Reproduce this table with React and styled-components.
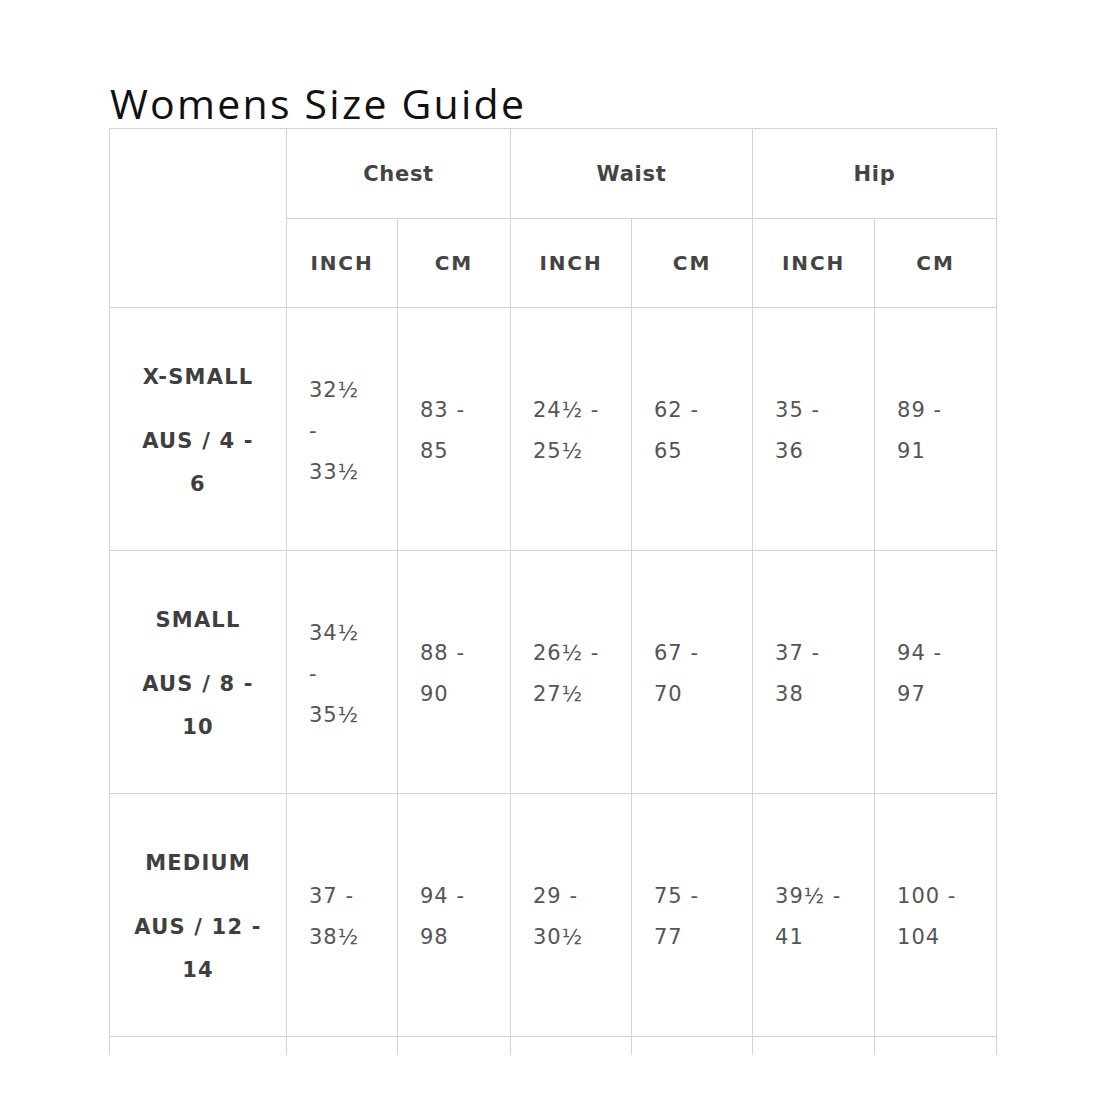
import React from "react";
import styled, { createGlobalStyle } from "styled-components";

const GlobalStyle = createGlobalStyle`
  body {
    margin: 0;
    background: #fff;
    font-family: "DejaVu Sans", "Open Sans", sans-serif;
  }
`;

const Page = styled.div`
  padding: 78px 0 0 109px;
`;

const Title = styled.h2`
  margin: 0 0 0 1px;
  font-family: "Open Sans", sans-serif;
  font-size: 41px;
  font-weight: 400;
  line-height: 50px;
  color: #111;
  letter-spacing: 2.25px;
`;

const Clip = styled.div`
  width: 888px;
  height: 927px;
  overflow: hidden;
`;

const Table = styled.table`
  width: 888px;
  table-layout: fixed;
  border-collapse: collapse;
  border: 1px solid #d3d3d3;
`;

const Cell = styled.td`
  border: 1px solid #d3d3d3;
  padding: 4px 0 0 ${(p) => (p.$center ? 0 : 22)}px;
  height: 238px;
  vertical-align: middle;
  text-align: ${(p) => (p.$center ? "center" : "left")};
  font-size: 21px;
  line-height: 41px;
  letter-spacing: 1px;
  color: #555;
`;

const Head = styled.th`
  border: 1px solid #d3d3d3;
  height: ${(p) => (p.$sub ? 88 : 89)}px;
  padding: 0;
  text-align: center;
  vertical-align: middle;
  font-size: ${(p) => (p.$sub ? 20 : 21)}px;
  font-weight: 700;
  letter-spacing: ${(p) => (p.$sub ? 1.9 : 0.7)}px;
  color: #444;
`;

const Label = styled.div`
  font-size: 21px;
  font-weight: 700;
  line-height: 43px;
  color: #3f3f3f;
  letter-spacing: 1.2px;
  & + & {
    margin-top: 21px;
  }
`;

const widths = [177, 111, 113, 121, 121, 122, 122];

const rows = [
  {
    name: "X-SMALL",
    aus: ["AUS / 4 -", "6"],
    cells: [["32½", "-", "33½"], ["83 -", "85"], ["24½ -", "25½"], ["62 -", "65"], ["35 -", "36"], ["89 -", "91"]],
  },
  {
    name: "SMALL",
    aus: ["AUS / 8 -", "10"],
    cells: [["34½", "-", "35½"], ["88 -", "90"], ["26½ -", "27½"], ["67 -", "70"], ["37 -", "38"], ["94 -", "97"]],
  },
  {
    name: "MEDIUM",
    aus: ["AUS / 12 -", "14"],
    cells: [["37 -", "38½"], ["94 -", "98"], ["29 -", "30½"], ["75 -", "77"], ["39½ -", "41"], ["100 -", "104"]],
  },
];

const Lines = ({ lines }) =>
  lines.map((l, i) => (
    <React.Fragment key={i}>
      {i > 0 && <br />}
      {l}
    </React.Fragment>
  ));

export default function App() {
  return (
    <Page>
      <GlobalStyle />
      <Title>Womens Size Guide</Title>
      <Clip>
        <Table>
          <colgroup>
            {widths.map((w, i) => (
              <col key={i} style={{ width: w }} />
            ))}
          </colgroup>
          <thead>
            <tr>
              <Head rowSpan={2} />
              <Head colSpan={2}>Chest</Head>
              <Head colSpan={2}>Waist</Head>
              <Head colSpan={2}>Hip</Head>
            </tr>
            <tr>
              {["INCH", "CM", "INCH", "CM", "INCH", "CM"].map((t, i) => (
                <Head key={i} $sub>
                  {t}
                </Head>
              ))}
            </tr>
          </thead>
          <tbody>
            {rows.map((r) => (
              <tr key={r.name}>
                <Cell $center>
                  <Label>{r.name}</Label>
                  <Label>
                    <Lines lines={r.aus} />
                  </Label>
                </Cell>
                {r.cells.map((c, i) => (
                  <Cell key={i}>
                    <Lines lines={c} />
                  </Cell>
                ))}
              </tr>
            ))}
            <tr>
              {widths.map((w, i) => (
                <Cell key={i} />
              ))}
            </tr>
          </tbody>
        </Table>
      </Clip>
    </Page>
  );
}
